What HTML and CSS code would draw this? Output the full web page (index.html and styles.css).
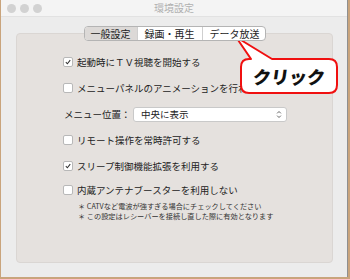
FILE: index.html
```html
<!DOCTYPE html>
<html lang="ja">
<head>
  <meta charset="UTF-8">
  <title>環境設定</title>
  <link rel="stylesheet" href="styles.css">
</head>
<body>

  <!-- 環境設定ウィンドウ -->
  <div class="window">
    <div class="titlebar">
      <span class="light"></span>
      <span class="light"></span>
      <span class="light"></span>
      <div class="title">環境設定</div>
    </div>

    <div class="content">
      <div class="tabs">
        <div class="tab selected">一般設定</div>
        <div class="tab">録画・再生</div>
        <div class="tab">データ放送</div>
      </div>

      <div class="panel">
        <div class="row">
          <span class="check on"><svg viewBox="0 0 10 10"><path d="M2.3 5.2 L4.2 7.2 L7.8 2.6" /></svg></span>
          <span>起動時にＴＶ視聴を開始する</span>
        </div>
        <div class="row">
          <span class="check"></span>
          <span class="nowrap">メニューパネルのアニメーションを行わない</span>
        </div>
        <div class="row">
          <span class="label">メニュー位置：</span>
          <div class="select">
            <span>中央に表示</span>
            <svg class="chevron" viewBox="0 0 8 12"><path d="M1.5 4.5 L4 2 L6.5 4.5 M1.5 7.5 L4 10 L6.5 7.5" /></svg>
          </div>
        </div>
        <div class="row">
          <span class="check"></span>
          <span>リモート操作を常時許可する</span>
        </div>
        <div class="row">
          <span class="check on"><svg viewBox="0 0 10 10"><path d="M2.3 5.2 L4.2 7.2 L7.8 2.6" /></svg></span>
          <span>スリープ制御機能拡張を利用する</span>
        </div>
        <div class="row last">
          <span class="check"></span>
          <span>内蔵アンテナブースターを利用しない</span>
        </div>
        <div class="note">＊ CATVなど電波が強すぎる場合にチェックしてください</div>
        <div class="note">＊ この設定はレシーバーを接続し直した際に有効となります</div>
      </div>
    </div>

    <!-- 吹き出し -->
    <div class="callout">
      <svg viewBox="0 0 106 60" width="106" height="60">
        <path d="M2 2 L38 24 H95 Q103 24 103 32 V50 Q103 58 95 58 H15 Q7 58 7 50 V32 Q7 24 15 24 H17 Z" />
      </svg>
      <div class="callout-text">クリック</div>
    </div>
  </div>

</body>
</html>
```

FILE: styles.css
```css
body {
  margin: 0;
  padding: 0 2px 2px 1px;
  background-color: #c9a47c;
  font-family: "Noto Sans CJK JP", "Noto Sans", sans-serif;
  color: #222;
}
/* ウィンドウ */
.window {
  position: relative;
  width: 347px;
  height: 277px;
  background-color: #ececec;
  box-sizing: border-box;
  border-right: 1px solid #8f8f8f;
}
.titlebar {
  height: 16px;
  background-color: #f4f4f4;
  border-bottom: 1px solid #e2e2e2;
  display: flex;
  align-items: center;
  padding-left: 6px;
  gap: 4px;
  position: relative;
}
.light {
  width: 9px;
  height: 9px;
  border-radius: 50%;
  background-color: #d2d2d2;
}
.title {
  position: absolute;
  left: 0;
  right: 0;
  top: 0;
  line-height: 16px;
  text-align: center;
  font-size: 10px;
  color: #b0b0b0;
}
/* 本体 */
.content {
  padding: 9px 14px 0 15px;
}
.tabs {
  position: relative;
  z-index: 1;
  display: flex;
  width: 182px;
  height: 15px;
  margin: 0 auto;
  box-sizing: border-box;
  border: 1px solid #b4b4b4;
  border-radius: 4px;
  background-color: #fff;
  overflow: hidden;
}
.tab {
  font-size: 10px;
  line-height: 13px;
  text-align: center;
  border-left: 1px solid #cfcfcf;
  flex: 0 0 64px;
}
.tab:first-child {
  border-left: none;
  flex-basis: 52px;
}
.tab.selected {
  background-color: #dcd9d7;
}
.panel {
  margin-top: -8px;
  height: 230px;
  box-sizing: border-box;
  padding: 15px 0 0 46px;
  background-color: #e5e1de;
  border: 1px solid #dad6d3;
  border-radius: 4px;
  overflow: hidden;
}
.row {
  display: flex;
  align-items: center;
  height: 26px;
  font-size: 9.5px;
  gap: 4px;
}
.row.last {
  height: 22px;
}
.nowrap {
  white-space: nowrap;
}
.check {
  width: 10px;
  height: 10px;
  flex: none;
  box-sizing: border-box;
  background-color: #fff;
  border: 1px solid #b8b8b8;
  border-radius: 2px;
}
.check svg {
  display: block;
  width: 8px;
  height: 8px;
}
.check path {
  fill: none;
  stroke: #333;
  stroke-width: 1.3;
}
.label {
  flex: none;
  margin-left: 1px;
  width: 65px;
  white-space: nowrap;
}
.select {
  display: flex;
  align-items: center;
  justify-content: space-between;
  flex: none;
  width: 154px;
  height: 15px;
  box-sizing: border-box;
  padding: 0 4px 0 7px;
  background-color: #fff;
  border: 1px solid #c9c9c9;
  border-radius: 3px;
}
.chevron {
  width: 6px;
  height: 9px;
}
.chevron path {
  fill: none;
  stroke: #555;
  stroke-width: 1.2;
}
.note {
  font-size: 7.2px;
  line-height: 10px;
  margin-left: 15px;
  color: #333;
  white-space: nowrap;
}
/* 吹き出し */
.callout {
  position: absolute;
  left: 233px;
  top: 35px;
  width: 106px;
  height: 60px;
}
.callout svg {
  display: block;
}
.callout path {
  fill: #fff;
  stroke: #f01010;
  stroke-width: 2;
  stroke-linejoin: round;
}
.callout-text {
  position: absolute;
  left: 15px;
  top: 24px;
  width: 80px;
  line-height: 34px;
  text-align: center;
  font-size: 18px;
  font-weight: 900;
  color: #111;
  transform: skewX(-8deg);
}
```
